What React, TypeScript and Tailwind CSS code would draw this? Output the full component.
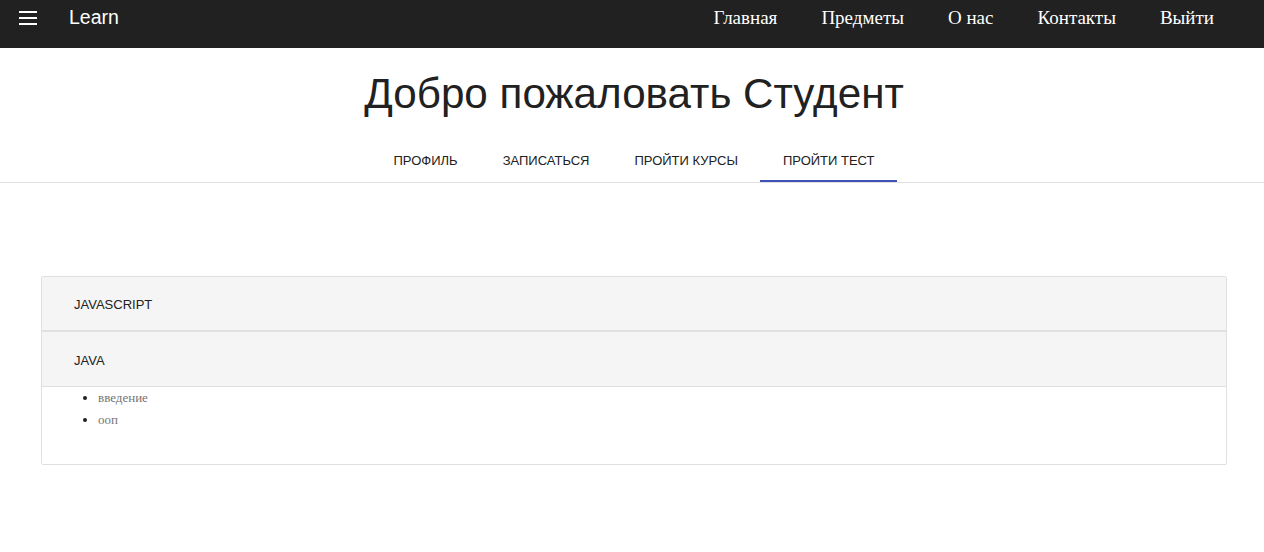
import React from 'react';

const NAV_LINKS = ['Главная', 'Предметы', 'О нас', 'Контакты', 'Выйти'];
const TABS = ['Профиль', 'Записаться', 'Пройти курсы', 'Пройти тест'];

const App: React.FC = () => {
  return (
    <div className="min-h-screen bg-white" style={{ fontFamily: '"Liberation Sans", Arial, sans-serif' }}>
      <header className="h-12 bg-[#212121] flex items-center text-white">
        <button className="ml-[19px] w-[18px] flex flex-col gap-[4px] -mt-[13px]">
          <span className="block h-[2px] bg-white"></span>
          <span className="block h-[2px] bg-white"></span>
          <span className="block h-[2px] bg-white"></span>
        </button>
        <span className="ml-8 text-[19.5px] leading-none -mt-[13px]">Learn</span>
        <nav className="ml-auto mr-[50px] flex gap-[44px] -mt-[13px]">
          {NAV_LINKS.map((link) => (
            <a key={link} className="font-['Liberation_Serif',serif] text-[19px] leading-none text-white">
              {link}
            </a>
          ))}
        </nav>
      </header>

      <h1 className="text-center pl-[4px] text-[42.2px] leading-none text-[#212121] mt-[25px]">
        Добро пожаловать Студент
      </h1>

      <div className="mt-[27px] border-b border-[#e0e0e0] flex justify-center">
        <div className="flex ml-[4px]">
          {TABS.map((tab, i) => (
            <div
              key={tab}
              className={`px-[22.5px] pt-[12px] pb-[13px] text-[13px] leading-none uppercase text-[#212121] border-b-2 ${
                i === 3 ? 'border-[#3f51b5]' : 'border-transparent'
              }`}
            >
              {tab}
            </div>
          ))}
        </div>
      </div>

      <div className="ml-[41px] mr-[37px] mt-[93px] border border-[#e0e0e0] rounded-[2px]">
        <div className="h-[55px] bg-[#f5f5f5] border-b-2 border-[#e0e0e0] flex items-center pl-[32px] pt-[3px] text-[13px] text-[#212121]">
          JAVASCRIPT
        </div>
        <div className="h-[55px] bg-[#f5f5f5] border-b border-[#e0e0e0] flex items-center pl-[32px] pt-[3px] text-[13px] text-[#212121]">
          JAVA
        </div>
        <ul className="list-disc pl-[56px] pt-0 pb-[33px] font-['Liberation_Serif',serif] text-[13px] text-[#757575] leading-[22px] marker:text-[#212121]">
          <li>введение</li>
          <li>ооп</li>
        </ul>
      </div>
    </div>
  );
};

export default App;
